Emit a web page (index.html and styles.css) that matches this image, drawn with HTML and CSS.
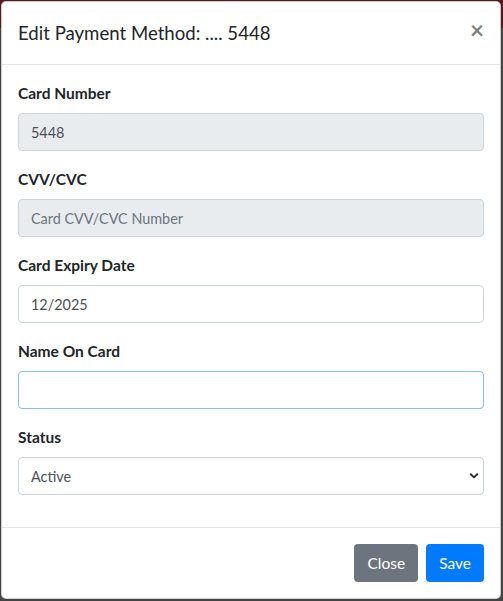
FILE: index.html
```html
<!DOCTYPE html>
<html lang="en">
<head>
  <meta charset="UTF-8">
  <meta name="viewport" content="width=device-width, initial-scale=1.0">
  <title>Edit Payment Method</title>
  <link rel="stylesheet" href="styles.css">
</head>
<body>
  <div class="modal">
    <div class="modal-header">
      <h5 class="modal-title">Edit Payment Method: .... 5448</h5>
      <button type="button" class="close">&times;</button>
    </div>

    <div class="modal-body">
      <div class="form-group">
        <label>Card Number</label>
        <input type="text" class="form-control" value="5448" disabled>
      </div>
      <div class="form-group">
        <label>CVV/CVC</label>
        <input type="text" class="form-control" placeholder="Card CVV/CVC Number" disabled>
      </div>
      <div class="form-group">
        <label>Card Expiry Date</label>
        <input type="text" class="form-control" value="12/2025">
      </div>
      <div class="form-group">
        <label>Name On Card</label>
        <input type="text" class="form-control focused">
      </div>
      <div class="form-group">
        <label>Status</label>
        <div class="select-wrap">
          <select class="form-control">
            <option>Active</option>
            <option>Inactive</option>
          </select>
          <svg class="chevron" width="10" height="8" viewBox="0 0 10 8">
            <path d="M1.8 2.2 L5 5.4 L8.2 2.2" fill="none" stroke="#333" stroke-width="2" stroke-linecap="round" stroke-linejoin="round"/>
          </svg>
        </div>
      </div>
    </div>

    <div class="modal-footer">
      <button type="button" class="btn btn-secondary">Close</button>
      <button type="button" class="btn btn-primary">Save</button>
    </div>
  </div>
</body>
</html>
```

FILE: styles.css
```css
html {
  background-color: #444;
}
body {
  font-family: Lato, "Liberation Sans", sans-serif;
  background: linear-gradient(#5b171c 0, #5b171c 28px, #444 28px);
  color: #212529;
  min-height: 100vh;
  box-sizing: border-box;
  margin: 0;
  padding: 1px 0 0 1px;
}
.modal {
  width: 500px;
  background-color: #fff;
  border: 1px solid rgba(0, 0, 0, .2);
  border-radius: 5px;
  box-sizing: border-box;
}
.modal-header {
  display: flex;
  align-items: flex-start;
  padding: 16px;
  border-bottom: 1px solid #e5e5e5;
}
.modal-title {
  margin: 0;
  font-size: 18.6px;
  font-weight: 400;
  line-height: 30px;
}
.close {
  margin: -16px -16px -16px auto;
  padding: 16px;
  background: none;
  border: none;
  font-family: inherit;
  font-size: 24px;
  font-weight: 700;
  line-height: 1;
  color: #000;
  opacity: .5;
}
.modal-body {
  padding: 16px;
}
.form-group {
  margin-bottom: 16px;
}
label {
  display: block;
  font-size: 15.5px;
  font-weight: 700;
  line-height: 24px;
  margin-bottom: 8px;
}
.form-control {
  display: block;
  width: 100%;
  height: 38px;
  box-sizing: border-box;
  padding: 6px 12px;
  font-family: inherit;
  font-size: 14.4px;
  color: #495057;
  background-color: #fff;
  border: 1px solid #ced4da;
  border-radius: 4px;
}
.form-control::placeholder {
  color: #6c757d;
}
.form-control:disabled {
  background-color: #e9ecef;
}
.focused {
  border-color: #80bdff;
}
.select-wrap {
  position: relative;
}
select.form-control {
  appearance: none;
}
.chevron {
  position: absolute;
  right: 5px;
  top: 15px;
}
.modal-footer {
  display: flex;
  justify-content: flex-end;
  padding: 12px;
  border-top: 1px solid #e5e5e5;
}
.btn {
  margin: 4px;
  padding: 6px 12px;
  font-family: inherit;
  font-size: 15.5px;
  line-height: 24px;
  color: #fff;
  border: 1px solid transparent;
  border-radius: 4px;
}
.btn-secondary {
  background-color: #6c757d;
}
.btn-primary {
  background-color: #007bff;
}
```
